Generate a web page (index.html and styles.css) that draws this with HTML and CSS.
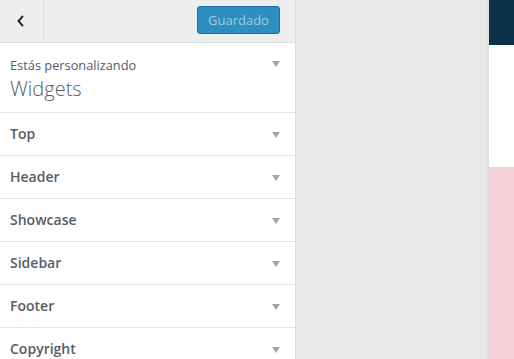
FILE: index.html
```html
<!DOCTYPE html>
<html lang="es">
<head>
    <meta charset="UTF-8">
    <meta name="viewport" content="width=device-width, initial-scale=1.0">
    <title>Personalizar: Widgets</title>
    <link rel="stylesheet" href="styles.css">
</head>
<body>
    <div class="layout">
        <div class="sidebar">
            <div class="topbar">
                <button class="back" aria-label="Volver">
                    <svg width="10" height="14" viewBox="0 0 10 14"><path d="M7 1.8 L2.5 7 L7 12.2" fill="none" stroke="#23282d" stroke-width="2"/></svg>
                </button>
                <div class="actions">
                    <button class="save" disabled>Guardado</button>
                </div>
            </div>
            <div class="info">
                <div class="info-text">
                    <span class="info-label">Estás personalizando</span>
                    <span class="info-title">Widgets</span>
                </div>
                <span class="arrow"></span>
            </div>
            <div class="section"><h3>Top</h3><span class="arrow"></span></div>
            <div class="section"><h3>Header</h3><span class="arrow"></span></div>
            <div class="section"><h3>Showcase</h3><span class="arrow"></span></div>
            <div class="section"><h3>Sidebar</h3><span class="arrow"></span></div>
            <div class="section"><h3>Footer</h3><span class="arrow"></span></div>
            <div class="section"><h3>Copyright</h3><span class="arrow"></span></div>
        </div>
        <div class="canvas"></div>
        <div class="preview">
            <div class="preview-head"></div>
            <div class="preview-white"></div>
            <div class="preview-pink"></div>
        </div>
    </div>
</body>
</html>
```
FILE: styles.css
```css
body {
    margin: 0;
    font-family: "Open Sans", sans-serif;
    background-color: #e8e8e8;
    overflow: hidden;
}

.layout {
    display: flex;
    height: 359px;
}

.sidebar {
    width: 295px;
    flex-shrink: 0;
    background-color: #fff;
    border-right: 1px solid #dddddd;
}

.topbar {
    display: flex;
    height: 42px;
    background-color: #eeeeee;
    border-bottom: 1px solid #dddddd;
}

.back {
    width: 44px;
    height: 42px;
    padding: 0 2px 0 0;
    border: none;
    border-right: 1px solid #dddddd;
    background: none;
    display: flex;
    align-items: center;
    justify-content: center;
}

.actions {
    flex: 1;
    display: flex;
    justify-content: flex-end;
    padding: 6px 15px 0 0;
}

.save {
    height: 28px;
    width: 83px;
    padding: 0;
    font-family: "Open Sans", sans-serif;
    font-size: 13px;
    color: #9fcde4;
    background-color: #2b8fc1;
    border: 1px solid #1f6f98;
    border-radius: 3px;
}

.info {
    display: flex;
    justify-content: space-between;
    height: 69px;
    padding: 0 15px 0 10px;
    border-bottom: 1px solid #e5e5e5;
}

.info-text {
    display: flex;
    flex-direction: column;
    padding-top: 13px;
}

.info-label {
    font-size: 12.8px;
    line-height: 18px;
    color: #555d66;
}

.info-title {
    font-size: 20px;
    font-weight: 300;
    line-height: 28px;
    margin-top: 1px;
    color: #555d66;
}

.info .arrow {
    margin-top: 18px;
}

.section {
    display: flex;
    align-items: center;
    justify-content: space-between;
    height: 42px;
    padding: 0 15px 0 10px;
    border-bottom: 1px solid #e5e5e5;
}

.section h3 {
    margin: 0 0 2px;
    font-size: 14px;
    font-weight: 600;
    color: #555d66;
}

.arrow {
    width: 0;
    height: 0;
    border-left: 4px solid transparent;
    border-right: 4px solid transparent;
    border-top: 6px solid #a0a5aa;
    margin-top: 2px;
}

.canvas {
    width: 193px;
    flex-shrink: 0;
    background: linear-gradient(to right, #e8e8e8 188px, #dedede 193px);
}

.preview {
    flex: 1;
    display: flex;
    flex-direction: column;
}

.preview-head {
    height: 45px;
    background-color: #0c3049;
}

.preview-white {
    height: 122px;
    background-color: #fff;
}

.preview-pink {
    flex: 1;
    background-color: #f7d1d8;
}
```
